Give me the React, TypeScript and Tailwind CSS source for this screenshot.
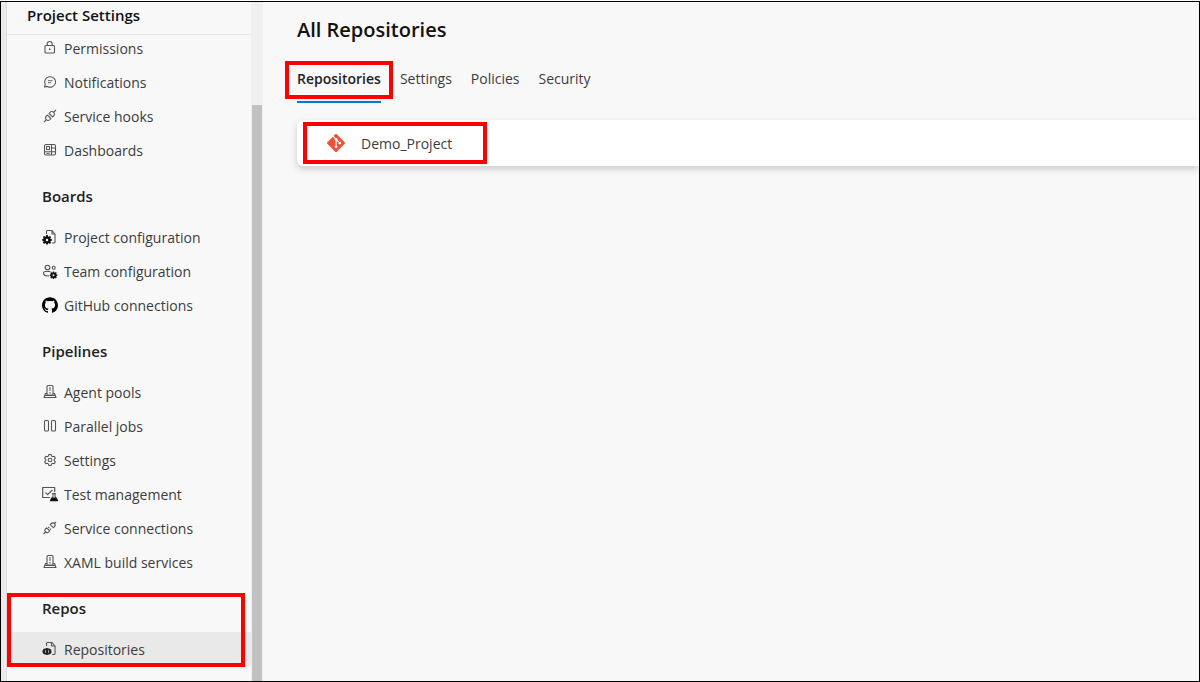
import React from "react";
import { SiGit, SiGithub } from "react-icons/si";

type IconProps = { className?: string };

function Svg({ children }: { children: React.ReactNode }) {
  return (
    <svg
      viewBox="0 0 16 16"
      className="size-4"
      fill="none"
      stroke="currentColor"
      strokeWidth="1.1"
      strokeLinejoin="round"
      aria-hidden="true"
    >
      {children}
    </svg>
  );
}

const LockIcon = () => (
  <Svg>
    <rect x="3" y="5.5" width="9.500" height="7.5" rx="1" />
    <path d="M5.200 5.500V4a2.500 2.500 0 0 1 5 0v1.500" />
    <circle cx="7.700" cy="9.200" r="0.900" fill="currentColor" stroke="none" />
  </Svg>
);

const ChatIcon = () => (
  <Svg>
    <path d="M2.500 13l.8-2.600A5.500 5.200 0 1 1 5.300 12.400z" />
    <path d="M6 6.700h4.500M6 8.700h3" strokeWidth="0.9" />
  </Svg>
);

const PlugIcon = () => (
  <Svg>
    <path d="M2 14l2.200-2.200M11.800 4.200L14 2" />
    <path d="M4.300 11.700c-1.200-1.300-.9-2.700.2-3.700l1-.9 3.400 3.400-.9 1c-1 1.100-2.400 1.400-3.700.2z" />
    <path d="M11.700 4.300c-1.300-1.200-2.700-.9-3.700.2l-.9 1 3.400 3.400 1-.9c1.100-1 1.400-2.400.2-3.700z" />
  </Svg>
);

const PlugOpenIcon = () => (
  <Svg>
    <path d="M1.500 14l2-2M12.500 3.500l1.500-1.500M6.300 8l1-1M8 9.700l1-1" />
    <path d="M3.500 12c-1-1.200-.8-2.400.2-3.300l1-.9 3 3-.9 1c-1 1-2.200 1.200-3.300.2z" />
    <path d="M12.500 3.500c-1.200-1-2.400-.8-3.300.2l-.9 1 3 3 1-.9c1-1 1.200-2.200.2-3.300z" />
  </Svg>
);

const DashboardIcon = () => (
  <Svg>
    <rect x="2.500" y="2.500" width="11" height="10.500" rx="1.500" />
    <path d="M9.500 2.500V13M2.500 9.700h11M9.500 6h4" />
    <rect x="4.500" y="4.500" width="3" height="3" />
    <path d="M4.500 11.400h3" />
  </Svg>
);

const Gear = () => (
  <g stroke="none" fill="#111">
    <path
      fillRule="evenodd"
      d="M4.200 6.100h1.600l.3 1.300.7.300 1.200-.8 1.100 1.200-.7 1.100.3.700 1.300.300v1.400l-1.300.300-.3.700.7 1.100-1.100 1.200-1.200-.8-.7.300-.3 1.200H4.200l-.3-1.200-.7-.3-1.200.8-1.100-1.200.7-1.100-.3-.7-1.200-.300v-1.400l1.200-.300.3-.7-.7-1.100 1.100-1.200 1.200.8.7-.3zM5 9.800a1.200 1.200 0 1 0 0 2.400 1.200 1.200 0 0 0 0-2.400z"
    />
  </g>
);

const FileGearIcon = () => (
  <Svg>
    <path d="M4.500 5V2.500q0-1 1-1h4.500l3 3.500v8q0 1-1 1h-2M10 1.500V5h3" />
    <Gear />
  </Svg>
);

const TeamGearIcon = () => (
  <Svg>
    <circle cx="5.500" cy="4.500" r="2.300" />
    <circle cx="11.700" cy="4.700" r="1.500" />
    <path d="M8.500 8.500H3.500q-2 0-2 1.500c0 2 2 3 4.500 3h1" />
    <g transform="translate(7.500 3.500) scale(.8)">
      <Gear />
    </g>
  </Svg>
);

const ServerIcon = () => (
  <Svg>
    <path d="M5 11V2.500q0-1 1-1h4q1 0 1 1V11z" />
    <path d="M5 9.500H3.500l-1.500 4h12l-1.500-4H11M3 11.500h10" />
    <path d="M7 4h2M7 6h2" />
    <path d="M8 8v1.500" />
  </Svg>
);

const ParallelIcon = () => (
  <Svg>
    <rect x="2.500" y="2.500" width="4" height="10.500" rx="1" />
    <rect x="9.500" y="2.500" width="4" height="10.500" rx="1" />
  </Svg>
);

const SettingsIcon = () => (
  <Svg>
    <path d="M6.900 2.500h2.200l.5 1.600 1 .6 1.700-.4 1.100 1.900-1.200 1.200v1.200l1.200 1.200-1.100 1.900-1.700-.4-1 .6-.5 1.600H6.900l-.5-1.600-1-.6-1.700.4-1.100-1.900 1.200-1.200V7.400L2.600 6.200l1.100-1.900 1.700.4 1-.6z" />
    <circle cx="8" cy="8" r="1.800" />
  </Svg>
);

const TestIcon = () => (
  <Svg>
    <path d="M8 11.500H.7v-10h12V6" strokeWidth="1.200" />
    <path d="M3.500 6.500l2.200 2.200L10.300 4" strokeWidth="1.200" />
    <path d="M10 7.500h4M11 7.500v2.700L8.500 14.500h7L13 10.200V7.500" />
    <path d="M10 12l-1.500 2.700h7L14 12z" fill="#111" stroke="#111" />
  </Svg>
);

const FileRepoIcon = () => (
  <Svg>
    <path d="M4.500 5V2.500q0-1 1-1h4.500l3 3.500v7.500q0 1-1 1H10M9.500 1.500V5H13" />
    <ellipse cx="5" cy="10.500" rx="4.500" ry="3.200" fill="#222" stroke="none" />
    <path d="M5 7v7M3 9.500v2M7 9.500v2" stroke="#222" strokeWidth="1.200" />
    <path d="M3.500 9.200v2.600M6.500 9.200v2.600" stroke="#e9e9e9" strokeWidth="0.700" />
  </Svg>
);

const GithubIcon = ({ className = "size-4" }: IconProps) => (
  <SiGithub className={`${className} text-black`} aria-hidden="true" />
);

type Item = { label: string; icon: React.ComponentType; active?: boolean };
type Group = { title?: string; items: Item[]; marked?: boolean };

const groups: Group[] = [
  {
    items: [
      { label: "Permissions", icon: LockIcon },
      { label: "Notifications", icon: ChatIcon },
      { label: "Service hooks", icon: PlugIcon },
      { label: "Dashboards", icon: DashboardIcon },
    ],
  },
  {
    title: "Boards",
    items: [
      { label: "Project configuration", icon: FileGearIcon },
      { label: "Team configuration", icon: TeamGearIcon },
      { label: "GitHub connections", icon: GithubIcon },
    ],
  },
  {
    title: "Pipelines",
    items: [
      { label: "Agent pools", icon: ServerIcon },
      { label: "Parallel jobs", icon: ParallelIcon },
      { label: "Settings", icon: SettingsIcon },
      { label: "Test management", icon: TestIcon },
      { label: "Service connections", icon: PlugOpenIcon },
      { label: "XAML build services", icon: ServerIcon },
    ],
  },
  {
    title: "Repos",
    marked: true,
    items: [{ label: "Repositories", icon: FileRepoIcon, active: true }],
  },
];

const tabs = ["Repositories", "Settings", "Policies", "Security"];

function Sidebar() {
  return (
    <aside className="flex w-[245px] shrink-0 flex-col border-l border-[#dcdcdc] bg-[#f8f8f8]">
      <header className="z-10 flex h-[33px] shrink-0 items-center border-b border-[#e6e6e6] bg-[#f8f8f8] pb-1.5 pl-5">
        <h2 className="text-[15px] leading-6 font-semibold text-[#111]">Project Settings</h2>
      </header>

      {/* List is scrolled to its end */}
      <nav className="flex min-h-0 flex-1 flex-col justify-end overflow-hidden pb-[15px]">
        {groups.map((group, i) => (
          <section key={i} className="relative shrink-0">
            {group.title && (
              <h3 className="pt-[17px] pb-3 pl-[35px] text-[15px] leading-6 font-semibold text-[#222]">
                {group.title}
              </h3>
            )}
            <ul>
              {group.items.map(({ label, icon: Icon, active }) => (
                <li key={label}>
                  <a
                    href="#"
                    className={`flex h-[34px] items-center gap-[6px] pt-0.5 pl-[35px] text-sm text-[#3c3c3c] ${
                      active ? "bg-[#e9e9e9] shadow-[inset_2px_0_0_#0078d4]" : ""
                    }`}
                  >
                    <span className="flex size-4 shrink-0 items-center pb-0.5 text-[#555]">
                      <Icon />
                    </span>
                    {label}
                  </a>
                </li>
              ))}
            </ul>
            {group.marked && (
              <div className="pointer-events-none absolute inset-x-0 top-3.5 -bottom-px mr-1.5 border-4 border-[#fe0000]" />
            )}
          </section>
        ))}
      </nav>
    </aside>
  );
}

function RepositoriesPage() {
  return (
    <main className="min-w-0 flex-1 bg-[#f8f8f8] pt-3 pl-[34px]">
      <h1 className="text-xl leading-8 font-semibold text-[#111]">All Repositories</h1>

      <div role="tablist" className="mt-[14px] flex gap-[19px]">
        {tabs.map((tab, i) => (
          <button
            key={tab}
            type="button"
            role="tab"
            aria-selected={i === 0}
            className={`relative h-[43px] border-b-2 pb-1 text-sm ${
              i === 0 ? "border-[#0078d4] font-semibold text-[#222]" : "border-transparent text-[#3c3c3c]"
            }`}
          >
            {tab}
            {i === 0 && (
              <span className="pointer-events-none absolute -inset-x-3 top-px bottom-0.5 border-4 border-[#fe0000]" />
            )}
          </button>
        ))}
      </div>

      <div className="mt-[17px] rounded-l-md bg-white shadow-[0_3px_7px_rgba(0,0,0,0.18)]">
        <a href="#" className="relative flex h-[46px] items-center gap-4 pl-[30px] text-sm text-[#3c3c3c]">
          <SiGit className="size-[18px] text-[#f05033]" aria-hidden="true" />
          <span className="pt-0.5">Demo_Project</span>
          <span className="pointer-events-none absolute inset-y-0.5 left-1.5 w-[184px] border-4 border-[#fe0000]" />
        </a>
      </div>
    </main>
  );
}

export default function App() {
  return (
    <div className="h-screen bg-white pt-px font-['Open_Sans','Noto_Sans',sans-serif]">
      <div className="flex h-full overflow-hidden border border-black bg-[#f8f8f8]">
        <div className="w-[5px] shrink-0 bg-[#eaeaea]" />
        <Sidebar />
        {/* Scrollbar */}
        <div className="flex w-3 shrink-0 flex-col bg-[#f0f0f0] px-px pt-[103px]">
          <div className="flex-1 bg-[#c1c1c1]" />
        </div>
        <RepositoriesPage />
      </div>
    </div>
  );
}
